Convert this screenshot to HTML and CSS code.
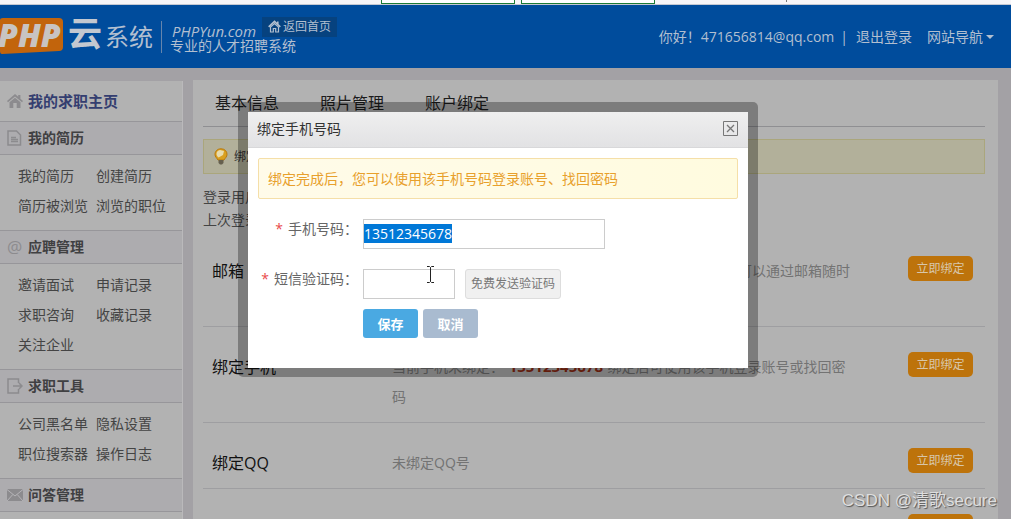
FILE: index.html
```html
<!DOCTYPE html>
<html lang="zh-CN">
<head>
<meta charset="utf-8">
<title>绑定手机号码</title>
<link rel="stylesheet" href="styles.css">
</head>
<body>
<div class="strip"><span class="strip-box"></span><span class="strip-box"></span><span class="strip-mark"></span></div>
<header class="header">
  <div class="logo">
    <svg class="logo-shape" viewBox="0 0 64 38" aria-hidden="true"><path d="M0 2Q0 0 3 0H59Q63 0 63 4V29Q63 33 59 33L2 36Q0 36 0 33Z"/></svg>
    <span class="logo-php">PHP</span>
  </div>
  <span class="logo-cloud">云</span>
  <span class="logo-name">系统</span>
  <div class="slogan">
    <div class="slogan-top">
      <i>PHPYun.com</i>
      <a class="back" href="#"><svg width="13" height="13" viewBox="0 0 13 13" fill="none" stroke="currentColor" aria-hidden="true"><path d="M.7 6.8 6.5 1.3l5.8 5.5M9.8 1.5v2.6" stroke-width="1.6"/><path d="M2.5 7v5h2.8V8.5h2.4V12h2.8V7L6.5 3.5Z" stroke-width="1.2"/></svg>返回首页</a>
    </div>
    <span>专业的人才招聘系统</span>
  </div>
  <nav class="user">
    <span>你好！471656814@qq.com</span><span class="bar">|</span><a href="#">退出登录</a><a class="nav-more" href="#">网站导航<span class="caret"></span></a>
  </nav>
</header>
<div class="layout">
  <aside class="sidebar">
    <h2 class="home"><svg width="16" height="16" viewBox="0 0 16 16" fill="currentColor" aria-hidden="true"><path d="M8 1 0 8l1 1.2L8 3.4l7 5.8 1-1.2-2.6-2.3V2h-2.2v1.7ZM2.5 9.3 8 4.8l5.5 4.500V15H9.700V10H6.300v5H2.500Z"/></svg><a href="#">我的求职主页</a></h2>
    <h2 class="group"><svg width="16" height="16" viewBox="0 0 16 16" fill="none" stroke="currentColor" stroke-width="1.500" aria-hidden="true"><path d="M1 1h8.500L13.500 5v10H1ZM4 7.500h5M4 9.500h7M4 11.500h7"/></svg>我的简历</h2>
    <div class="links"><a href="#">我的简历</a><a href="#">创建简历</a><a href="#">简历被浏览</a><a href="#">浏览的职位</a></div>
    <h2 class="group"><span class="at">@</span>应聘管理</h2>
    <div class="links"><a href="#">邀请面试</a><a href="#">申请记录</a><a href="#">求职咨询</a><a href="#">收藏记录</a><a href="#">关注企业</a></div>
    <h2 class="group"><svg width="16" height="16" viewBox="0 0 16 16" fill="none" stroke="currentColor" stroke-width="1.500" aria-hidden="true"><path d="M11.500 5V1H1v14h10.500v-4M6 8h9M12 5l3 3-3 3"/></svg>求职工具</h2>
    <div class="links"><a href="#">公司黑名单</a><a href="#">隐私设置</a><a href="#">职位搜索器</a><a href="#">操作日志</a></div>
    <h2 class="group"><svg width="16" height="16" viewBox="0 0 16 16" aria-hidden="true"><path d="M0 2h16v12H0Z" fill="currentColor"/><path d="m0 2.500 8 6.500 8-6.500M0 14l5.800-6.500M16 14l-5.800-6.500" fill="none" stroke="#b5b4b8"/></svg>问答管理</h2>
  </aside>
  <main class="main">
    <nav class="tabs"><a href="#">基本信息</a><a href="#">照片管理</a><a href="#">账户绑定</a></nav>
    <div class="tip"><svg width="14" height="17" viewBox="0 0 14 17" aria-hidden="true"><path d="M7 .8C3 .8 1 3.600 1 6.300c0 2.500 1.700 3.600 3 5.700h6c1.300-2.100 3-3.200 3-5.700C13 3.600 11 .8 7 .8Z" fill="#d9a020" stroke="#b9780a"/><path d="M6 2C4 2.300 2.500 4 2.500 6c0 1.500 1 2.500 2 3.500L9 7 10 3Z" fill="#e8dcae"/><path d="M4.500 12h5v3l-1.500 1.500H6L4.500 15Z" fill="#66604e"/></svg><span>绑定</span></div>
    <div class="login"><p>登录用户</p><p>上次登录</p></div>
    <section class="row tall"><h3>邮箱</h3><p class="end">您可以通过邮箱随时</p><button>立即绑定</button></section>
    <section class="row tall"><h3>绑定手机</h3><p>当前手机未绑定： <b>13512345678</b> 绑定后可使用该手机登录账号或找回密码</p><button>立即绑定</button></section>
    <section class="row"><h3>绑定QQ</h3><p>未绑定QQ号</p><button>立即绑定</button></section>
    <section class="row"><h3></h3><p></p><button>立即绑定</button></section>
  </main>
</div>
<div class="dialog" role="dialog" aria-labelledby="dialog-title">
  <div class="dialog-head"><span id="dialog-title">绑定手机号码</span><button class="close" aria-label="关闭"><svg width="15" height="15" viewBox="0 0 15 15" fill="none" stroke="#777" aria-hidden="true"><path d="M.5.5h14v14H.5Z"/><path d="m4 4 7 7m0-7-7 7" stroke-width="1.300"/></svg></button></div>
  <form class="form">
    <p class="notice">绑定完成后，您可以使用该手机号码登录账号、找回密码</p>
    <div class="field"><label for="phone"><em>*</em>手机号码：</label><input id="phone" class="phone" type="text" value="13512345678"></div>
    <div class="field"><label for="code"><em>*</em>短信验证码：</label><input id="code" class="code" type="text"><button type="button" class="send">免费发送验证码</button></div>
    <div class="actions"><button type="button" class="save">保存</button><button type="button" class="cancel">取消</button></div>
  </form>
  <svg class="pointer" width="9" height="17" viewBox="0 0 9 17" fill="none" stroke="#222" aria-hidden="true"><path d="M1 .5h2.500l1 1 1-1H8M4.500 1.500v14M1 16.500h2.500l1-1 1 1H8"/></svg>
</div>
<div class="watermark">CSDN @清歌secure</div>
<script src="app.js"></script>
</body>
</html>
```

FILE: app.js
```js
const phone = document.getElementById("phone");
phone.focus();
phone.select();
```

FILE: styles.css
```css
* { box-sizing: border-box; }
body {
  position: relative;
  display: flex;
  flex-direction: column;
  height: 100vh;
  margin: 0;
  overflow: hidden;
  background: #a3a1a5;
  color: #444;
  font: 14px/20px "Open Sans", "Noto Sans CJK SC", sans-serif;
}
h2, h3, p { margin: 0; font-weight: 400; }
a { color: inherit; text-decoration: none; }
button, input { font: inherit; margin: 0; }
svg { flex: none; }

.strip { display: flex; flex: none; gap: 6px; height: 5px; padding-left: 381px; background: #f7f5f8; border-bottom: 1px solid #c5c8d2; }
.strip-box { width: 134px; background: #fff; border: 1px solid #1c7b35; border-top: 0; }
.strip-mark { width: 1px; height: 2px; margin-left: 125px; background: #777; }

.header { display: flex; flex: none; align-items: center; height: 63px; background: #004c9c; color: #b2bfd0; }
.logo { position: relative; width: 64px; height: 38px; }
.logo-shape { display: block; width: 64px; height: 38px; fill: #c2640c; }
.logo-php { position: absolute; left: -2px; top: 0; font: italic 800 32px/34px "Open Sans", sans-serif; color: #c8c4c2; }
.logo-cloud { width: 36px; margin-left: 4px; padding-bottom: 8px; font-size: 34px; font-weight: 700; line-height: 40px; color: #c3c8d0; }
.logo-name { padding-right: 8px; margin-left: 1px; font-size: 24px; line-height: 32px; border-right: 1px solid #6585ad; }
.slogan { display: flex; flex-direction: column; padding-left: 8px; line-height: 16px; }
.slogan-top { display: flex; align-items: center; height: 18px; }
.slogan-top i { width: 92px; padding: 4px 0 0 2px; font-size: 15px; }
.back { display: flex; gap: 2px; align-items: center; height: 20px; padding: 0 6px; margin-bottom: 4px; background: #06427f; font-size: 12px; }
.user { display: flex; margin-left: auto; padding-right: 17px; }
.bar { margin: 0 8px 0 6px; }
.nav-more { display: flex; align-items: center; margin-left: 15px; }
.caret { margin-left: 3px; border: 4px solid transparent; border-top-color: currentColor; border-bottom: 0; }

.layout { display: flex; flex: 1; min-height: 0; gap: 10px; padding: 12px 13px 0 0; overflow: hidden; }
.sidebar { width: 183px; flex: none; margin-top: 1px; background: #b2b2b2; border-right: 1px solid #bab9bb; }
.home, .group { display: flex; align-items: center; gap: 5px; padding-left: 7px; font-size: 14px; font-weight: 700; color: #404042; }
.home { height: 40px; }
.home a { font-size: 15px; color: #343e70; }
.home svg, .group svg, .at { color: #8c8b8e; }
.group { height: 34px; background: #adacaf; border: solid #97969a; border-width: 1px 0; }
.at { width: 16px; font-size: 17px; font-weight: 400; }
.links { display: grid; grid-template-columns: 78px 1fr; padding: 6px 0 9px 18px; line-height: 30px; }

.main { flex: 1; min-width: 0; padding: 0 13px 0 10px; background: #b2b2b2; }
.tabs { display: flex; gap: 41px; padding: 0 12px; height: 47px; line-height: 46px; font-size: 16px; color: #1c1c1c; border-bottom: 1px solid #8f8f92; }
.tip { display: flex; align-items: center; gap: 6px; height: 35px; margin: 12px 0 11px; padding-left: 10px; background: #b2b09a; border: 1px solid #aaa67c; font-size: 12px; color: #333; }
.login { height: 46px; line-height: 23px; }
.row { display: flex; align-items: flex-start; padding: 25px 12px 10px 9px; line-height: 30px; border-bottom: 1px solid #9e9ea1; }
.tall { min-height: 96px; }
.row h3 { width: 180px; flex: none; font-size: 16px; color: #111; }
.row p { flex: 0 1 460px; color: #737373; }
.row .end { text-align: right; padding-right: 2px; }
.row b { margin: 0 1px; font-size: 15px; line-height: 20px; color: #8d2a12; }
.row button { width: 65px; height: 25px; margin-left: auto; padding: 0; border: 0; border-radius: 5px; background: #bd730b; color: #d8c7aa; font-size: 12px; line-height: 24px; }

.dialog { position: absolute; left: 238px; top: 102px; width: 520px; border: 10px solid rgba(0, 0, 0, .3); border-bottom-width: 9px; border-radius: 5px; background: #fff; background-clip: padding-box; }
.dialog-head { display: flex; align-items: center; justify-content: space-between; height: 36px; padding: 0 10px 2px 9px; background: linear-gradient(#efefef, #e2e2e4); border-bottom: 1px solid #d8d8da; color: #333; }
.close { display: flex; padding: 0; border: 0; background: none; }
.form { display: flex; flex-direction: column; gap: 20px; padding: 10px 10px 30px; color: #666; }
.notice { padding: 10px 9px 9px; line-height: 20px; border: 1px solid #f5dfa8; border-radius: 2px; background: linear-gradient(90deg, #fffbe9, #fffbdf); color: #e8a02c; }
.field { display: flex; }
.field label { width: 100px; margin-right: 5px; text-align: right; }
.field em { margin-right: 5px; font-style: normal; color: #e94b4b; }
.field input { height: 30px; padding: 0 0 2px; border: 1px solid #ccc; background: #fff; color: #333; outline: 0; }
.field input::selection { background: #0078d7; color: #fff; }
.phone { width: 242px; }
.code { width: 92px; }
.send { width: 96px; height: 30px; margin-left: 10px; padding: 0; border: 1px solid #ddd; border-radius: 3px; background: #f0f0f0; color: #777; font-size: 12px; }
.actions { display: flex; gap: 5px; margin: -10px 0 0 105px; }
.save, .cancel { width: 55px; height: 29px; padding: 0; border: 0; border-radius: 3px; color: #fff; font-size: 13px; font-weight: 700; }
.save { background: #4aa9e2; }
.cancel { background: #a9bbd0; }
.pointer { position: absolute; left: 178px; top: 154px; }

.watermark { position: absolute; right: 14px; bottom: 6px; font: 17px/24px "Liberation Sans", "Noto Sans CJK SC", sans-serif; color: #dedede; text-shadow: 1px 1px 1px #555; }
```
